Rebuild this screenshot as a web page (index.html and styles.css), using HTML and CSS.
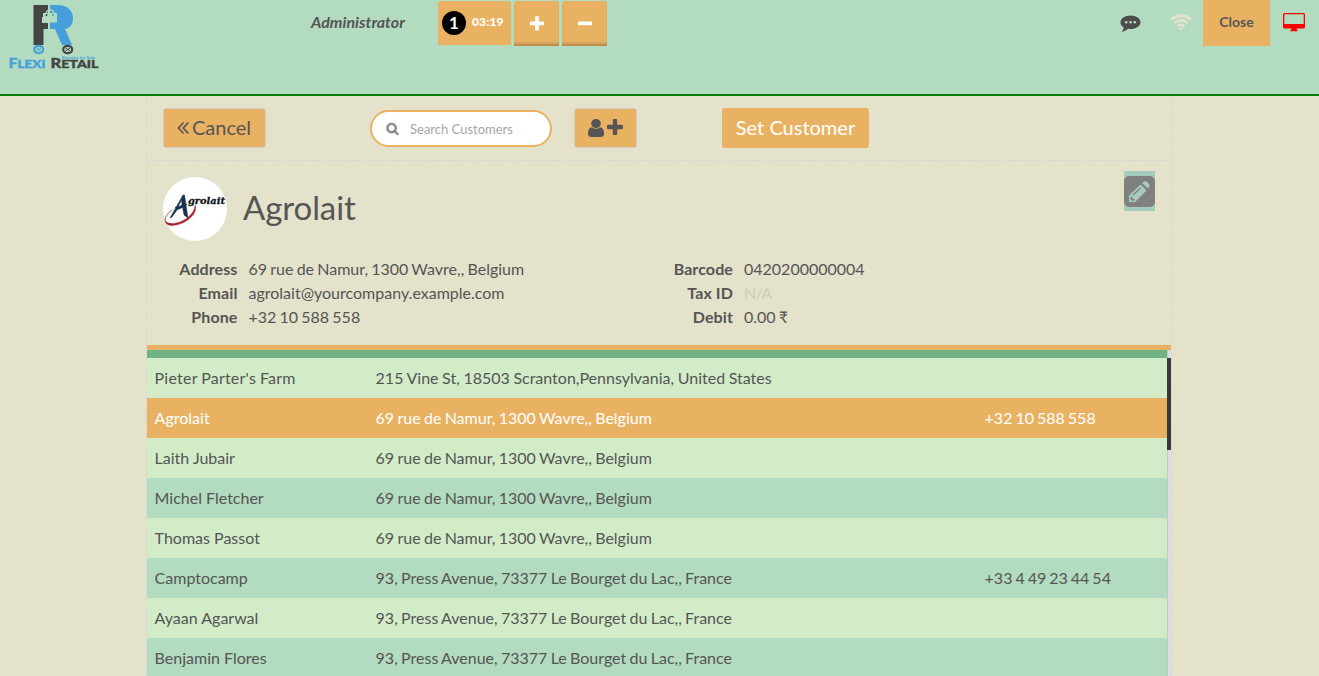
FILE: index.html
```html
<!DOCTYPE html>
<html lang="en">
<head>
<meta charset="utf-8">
<title>Flexi Retail</title>
<link rel="stylesheet" href="styles.css">
</head>
<body>
<header class="topbar">
  <svg class="logo" width="94" height="68" viewBox="0 0 94 68">
    <path fill="#444" d="M27.500 1H42V13H36V19H42V24H44V24H42V25H37.500V41H27.500Z"/>
    <path fill="#449fdb" d="M44 1H51C62 1 67 7 67 14C67 19 65 24 59 25L66 41H56L49 25H44Z"/>
    <path fill="#b3dbc0" d="M37 9H51V18.500H37Z"/>
    <path fill="none" stroke="#b3dbc0" stroke-width="1.300" d="M40 10C40 4.500 48 4.500 48 10"/>
    <circle cx="40.500" cy="11" r="1" fill="#444"/><circle cx="47" cy="11" r="1" fill="#449fdb"/>
    <g fill="none" stroke-width="2.200"><ellipse cx="32.700" cy="45.500" rx="4.500" ry="3.700" stroke="#449fdb"/><ellipse cx="61.700" cy="45.500" rx="4.500" ry="3.700" stroke="#444"/></g>
    <path fill="none" stroke="#449fdb" d="M30.500 44L35 47M35 44L30.500 47"/>
    <path fill="none" stroke="#444" d="M59.500 44L64 47M64 44L59.500 47"/>
    <text class="brand blue" x="2.500" y="64" textLength="37" lengthAdjust="spacingAndGlyphs">F<tspan class="cap">LEXI</tspan></text>
    <text class="brand dark" x="44.500" y="64" textLength="48" lengthAdjust="spacingAndGlyphs">R<tspan class="cap">ETAIL</tspan></text>
    <text class="tagline" x="56" y="54.500" textLength="33" lengthAdjust="spacingAndGlyphs">Eternity for Sale</text>
  </svg>
  <div class="username">Administrator</div>
  <div class="orders">
    <div class="order"><span class="number">1</span><span class="time">03:19</span></div>
    <div class="square"><svg width="18" height="18" viewBox="0 0 1792 1792"><path d="M1600 736v192q0 40-28 68t-68 28h-416v416q0 40-28 68t-68 28h-192q-40 0-68-28t-28-68v-416h-416q-40 0-68-28t-28-68v-192q0-40 28-68t68-28h416v-416q0-40 28-68t68-28h192q40 0 68 28t28 68v416h416q40 0 68 28t28 68z"/></svg></div>
    <div class="square"><svg width="18" height="18" viewBox="0 0 1792 1792"><path d="M1600 736v192q0 40-28 68t-68 28h-1216q-40 0-68-28t-28-68v-192q0-40 28-68t68-28h1216q40 0 68 28t28 68z"/></svg></div>
  </div>
  <div class="status">
    <svg class="chat" width="21" height="18" viewBox="0 0 21 18"><path fill="#4c4c4c" d="M10.500.5C16.200.5 20.500 3.500 20.500 7.200S16.200 14 10.500 14L8 13.800C6 15.500 4 16.500 1.500 17C2.800 15.500 3.500 14.500 3.700 12.500C1.800 11.200.5 9.300.5 7.200C.5 3.500 4.800.5 10.500.5Z"/><g fill="#b3dbc0"><circle cx="6.200" cy="7.200" r="1.300"/><circle cx="10.500" cy="7.200" r="1.300"/><circle cx="14.800" cy="7.200" r="1.300"/></g></svg>
    <svg class="wifi" width="22" height="17" viewBox="0 0 22 17"><g fill="none" stroke="#e4e2ca" stroke-width="2.700"><path d="M1 5.500Q11-2.500 21 5.500"/><path d="M4.300 9Q11 3.500 17.700 9"/><path d="M7.500 12.200Q11 9.300 14.500 12.200"/></g><path fill="#e4e2ca" d="M8.800 14Q11 12.500 13.200 14L11 16.200Z"/></svg>
    <div class="close">Close</div>
    <svg class="screen" width="22" height="19" viewBox="0 0 22 19"><path fill="red" fill-rule="evenodd" d="M1.500 0H20.500Q22 0 22 1.500V14Q22 15.500 20.500 15.500H13.500L14.500 17.500V18.300H7.500V17.500L8.500 15.500H1.500Q0 15.500 0 14V1.500Q0 0 1.500 0ZM1.300 1.300V11H20.700V1.300Z"/></svg>
  </div>
</header>
<main class="screen-content">
  <section class="toolbar">
    <div class="button cancel"><svg width="12" height="14" viewBox="0 0 12 14"><path fill="none" stroke="#555" stroke-width="1.700" d="M6.500 1.500L1.500 7L6.500 12.500M11.300 1.500L6.300 7L11.300 12.500"/></svg><span>Cancel</span></div>
    <div class="search"><svg width="13" height="13" viewBox="0 0 1792 1792"><path fill="#888" stroke="#888" stroke-width="70" d="M1216 832q0-185-131.500-316.500t-316.500-131.500-316.500 131.500-131.500 316.500 131.500 316.500 316.500 131.500 316.500-131.500 131.500-316.500zm512 832q0 52-38 90t-90 38q-54 0-90-38l-343-342q-179 124-399 124-143 0-273.500-55.500t-225-150-150-225-55.500-273.500 55.500-273.500 150-225 225-150 273.500-55.500 273.500 55.500 225 150 150 225 55.500 273.500q0 220-124 399l343 343q37 37 37 90z"/></svg><span>Search Customers</span></div>
    <div class="button new"><svg width="16" height="18" viewBox="256 128 1280 1536" preserveAspectRatio="none"><path fill="#555" d="M1536 1399q0 109-62.500 187t-150.500 78h-854q-88 0-150.500-78t-62.500-187q0-85 8.500-160.500t31.500-152 58.500-131 94-89 134.500-34.500q131 128 313 128t313-128q76 0 134.500 34.500t94 89 58.500 131 31.500 152 8.500 160.500zm-256-887q0 159-112.500 271.500t-271.500 112.500-271.500-112.500-112.500-271.500 112.500-271.500 271.500-112.500 271.500 112.500 112.500 271.500z"/></svg><svg class="add" width="16" height="16" viewBox="192 128 1408 1408"><path fill="#555" d="M1600 736v192q0 40-28 68t-68 28h-416v416q0 40-28 68t-68 28h-192q-40 0-68-28t-28-68v-416h-416q-40 0-68-28t-28-68v-192q0-40 28-68t68-28h416v-416q0-40 28-68t68-28h192q40 0 68 28t28 68v416h416q40 0 68 28t28 68z"/></svg></div>
    <div class="button set"><span>Set Customer</span></div>
  </section>
  <section class="details">
    <div class="heading">
      <svg class="avatar" width="64" height="64" viewBox="0 0 64 64"><circle cx="32" cy="32" r="32" fill="#fff"/>
        <path fill="#a5212f" stroke="#a5212f" stroke-width=".4" d="M9 33C-1 41 1 46.500 9 46.500C20 46.500 32 37 32 28C36 37 21 49 8 48.500C0 48 0 39 9 33Z"/>
        <path fill="#17324f" stroke="#17324f" stroke-width=".5" d="M7 41L20 18L21.500 18L25 41L21 38L19.500 30L14 33L9 40ZM15 30L19 28L18.500 23Z"/>
        <path fill="none" stroke="#17324f" d="M12 30Q16 34 24 27"/>
        <text class="avatar-text" x="25" y="27" textLength="37" lengthAdjust="spacingAndGlyphs">grolait</text></svg>
      <h1>Agrolait</h1>
      <div class="edit"><svg width="31" height="31" viewBox="0 0 31 31"><rect width="31" height="31" rx="5" fill="#808080"/><path fill="#a4cbbc" d="M5 26V19.500L16.500 8.500L22.500 14.500L11 26ZM18 7L20 5.500Q21.500 4.500 23 6L25 8Q26.500 9.500 25 11L24 12.500Z"/><path fill="none" stroke="#808080" stroke-width="1.200" d="M9 19L16.500 12"/><path fill="#808080" d="M6.500 21L8.500 21V23H10.500V24.500L8 24.800L6.300 23Z"/></svg></div>
    </div>
    <div class="facts">
      <dl><dt>Address</dt><dd>69 rue de Namur, 1300 Wavre,, Belgium</dd><dt>Email</dt><dd>agrolait@yourcompany.example.com</dd><dt>Phone</dt><dd>+32 10 588 558</dd></dl>
      <dl><dt>Barcode</dt><dd>0420200000004</dd><dt>Tax ID</dt><dd class="empty">N/A</dd><dt>Debit</dt><dd>0.00 ₹</dd></dl>
    </div>
  </section>
  <section class="list">
    <div class="rows">
      <div class="strip"></div>
      <div class="row first"><span>Pieter Parter's Farm</span><span>215 Vine St, 18503 Scranton,Pennsylvania, United States</span><span></span></div>
      <div class="row selected"><span>Agrolait</span><span>69 rue de Namur, 1300 Wavre,, Belgium</span><span>+32 10 588 558</span></div>
      <div class="row"><span>Laith Jubair</span><span>69 rue de Namur, 1300 Wavre,, Belgium</span><span></span></div>
      <div class="row even"><span>Michel Fletcher</span><span>69 rue de Namur, 1300 Wavre,, Belgium</span><span></span></div>
      <div class="row"><span>Thomas Passot</span><span>69 rue de Namur, 1300 Wavre,, Belgium</span><span></span></div>
      <div class="row even"><span>Camptocamp</span><span>93, Press Avenue, 73377 Le Bourget du Lac,, France</span><span>+33 4 49 23 44 54</span></div>
      <div class="row"><span>Ayaan Agarwal</span><span>93, Press Avenue, 73377 Le Bourget du Lac,, France</span><span></span></div>
      <div class="row even"><span>Benjamin Flores</span><span>93, Press Avenue, 73377 Le Bourget du Lac,, France</span><span></span></div>
    </div>
    <div class="scrollbar"><div class="thumb"></div></div>
  </section>
</main>
</body>
</html>
```
FILE: styles.css
```css
* { box-sizing: border-box; }
body { margin: 0; height: 676px; overflow: hidden; display: flex; flex-direction: column; background: #e4e2ca; color: #555; font: 16px/24px Lato, sans-serif; }
svg { display: block; flex: none; }
.topbar { height: 96px; flex: none; display: flex; align-items: flex-start; background: #b3dbc0; border-bottom: 2px solid green; }
.logo { margin: 4px 0 0 6px; }
.brand { font: 900 14px Lato, sans-serif; stroke-width: .4px; }
.cap { font-size: 12px; }
.blue { stroke: #449fdb; }
.blue, .tagline { fill: #449fdb; }
.dark { fill: #444; stroke: #444; }
.tagline { font: 700 3px Lato, sans-serif; }
.username { width: 127px; margin: 10px 0 0 211px; font-weight: bold; font-style: italic; }
.orders { display: flex; gap: 3px; padding-top: 1px; color: #fff; }
.order { width: 73px; height: 44px; padding: 0 4px; display: flex; align-items: center; gap: 6px; background: #e9b263; border-radius: 3px 3px 0 0; font-weight: 900; }
.number { width: 24px; height: 24px; border-radius: 50%; background: #000; text-align: center; font-size: 17px; font-weight: bold; }
.time { font-size: 12px; line-height: 24px; margin-top: -2px; letter-spacing: .15px; }
.square { width: 45px; height: 45px; display: flex; align-items: center; justify-content: center; background: #e9b263; border-radius: 3px 3px 0 0; box-shadow: inset 0 -4px 4px -3px #946b35; fill: #fff; }
.status { margin-left: auto; display: flex; }
.chat { margin-top: 15px; }
.wifi { margin: 14px 11px 0 29px; }
.close { width: 67px; height: 46px; background: #e9b263; text-align: center; font-size: 14px; font-weight: bold; line-height: 44px; }
.screen { margin: 13px 14px 0 13px; }
.screen-content { width: 1026px; flex: 1; min-height: 0; margin-left: 146px; border: 1px dashed #d5d5da; border-width: 0 1px; display: flex; flex-direction: column; }
.toolbar { height: 65px; flex: none; padding: 12px 16px; display: flex; border-bottom: 1px dashed #d5d5da; font-size: 20px; }
.button { height: 40px; display: flex; align-items: center; justify-content: center; background: #e9b263; border: 1px solid #cfcdc9; border-radius: 3px; }
.button span { padding-bottom: 2px; }
.cancel { width: 103px; padding-right: 1px; gap: 3px; }
.search { width: 182px; height: 37px; margin: 2px 22px 0 104px; padding-left: 14px; display: flex; align-items: center; gap: 11px; background: #fff; border: 2px solid #e9b263; border-radius: 19px; font-size: 13px; color: #a6a6a6; }
.new { width: 63px; gap: 3px; }
.add { margin-top: -2px; }
.set { width: 147px; margin-left: 85px; border: 0; color: #fff; }
.details { height: 184px; flex: none; padding: 10px 16px 0; }
.heading { height: 86px; display: flex; }
.avatar { margin-top: 6px; }
.avatar-text { font: italic 900 10px "DejaVu Serif", serif; fill: #101820; stroke: #101820; stroke-width: .3px; }
h1 { margin: 16px 0 0 16px; font-size: 33px; line-height: 40px; font-weight: normal; letter-spacing: -.1px; }
.edit { width: 31px; height: 40px; margin-left: auto; padding-top: 5px; background: #a4cbbc; }
.facts { display: grid; grid-template-columns: 495.5px 496px; margin-left: -.5px; }
dl { margin: 0; display: grid; grid-template-columns: 75px 1fr; column-gap: 11px; }
dt { text-align: right; font-weight: bold; letter-spacing: .1px; }
dd { margin: 0; word-spacing: -.9px; }
.empty { color: #cfcdbc; letter-spacing: -.7px; }
.list { flex: 1; min-height: 0; overflow: hidden; display: grid; grid-template-columns: 1020px 4px; border-top: 5px solid #e9b263; }
.strip { height: 8px; background: #70b186; }
.row { height: 40px; padding: 0 7.6px; display: grid; grid-template-columns: 221px 609px 1fr; line-height: 40px; background: #d2ecc8; }
.row span + span { word-spacing: -.8px; }
.row span:nth-child(3) { word-spacing: -1.1px; }
.row.first span { word-spacing: -.5px; }
.row.first span:first-child { letter-spacing: .22px; }
.even { background: #b3dbc0; }
.selected { background: #e9b263; color: #fff; }
.scrollbar { padding-top: 8px; background: #ddd; border-left: 1px solid #c6c6c6; }
.thumb { width: 4px; height: 92px; margin-left: -1px; background: #393939; }
```
